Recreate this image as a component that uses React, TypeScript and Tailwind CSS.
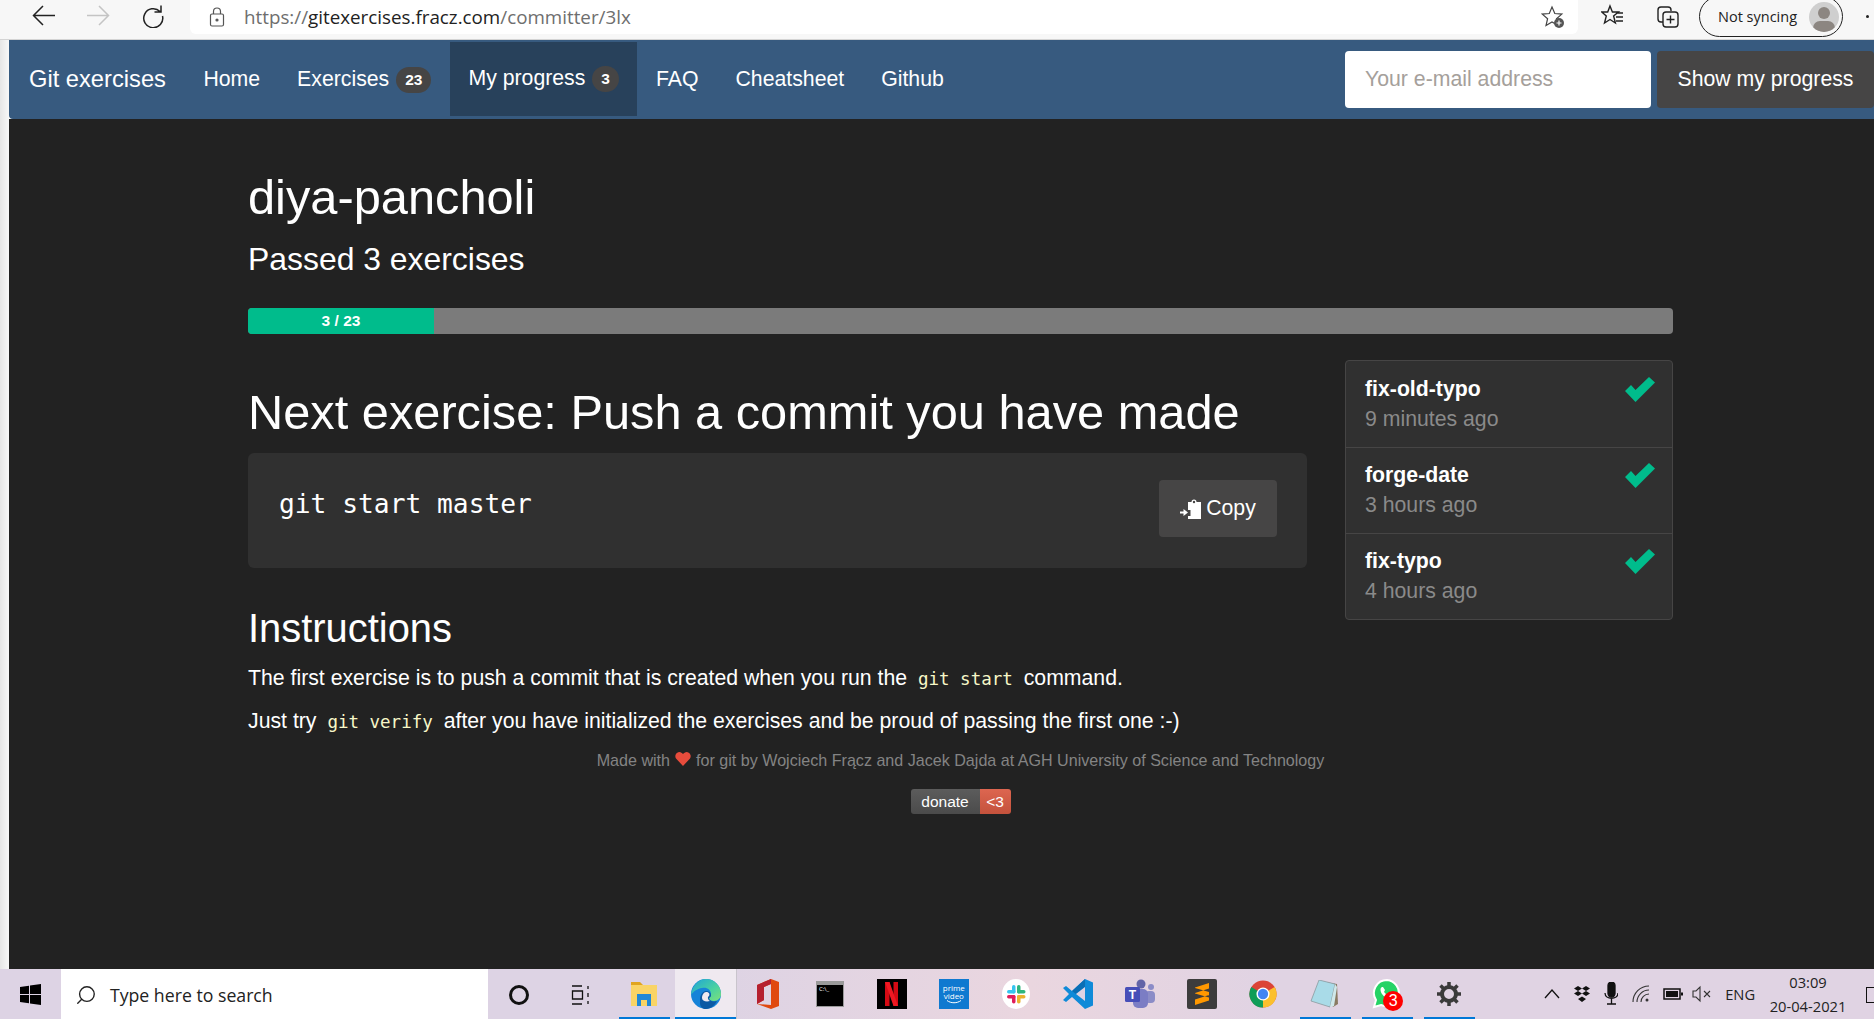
import { Search } from "lucide-react";

const NAV = [
  { label: "Home" },
  { label: "Exercises", badge: "23" },
  { label: "My progress", badge: "3", active: true },
  { label: "FAQ" },
  { label: "Cheatsheet" },
  { label: "Github" },
];

const PASSED = [
  { name: "fix-old-typo", when: "9 minutes ago" },
  { name: "forge-date", when: "3 hours ago" },
  { name: "fix-typo", when: "4 hours ago" },
];

function Check() {
  return (
    <svg width="30" height="25" viewBox="0 0 30 25" className="mt-[2px] shrink-0">
      <path d="M0 14 L6 8 L10.500 13 L24 0 L30 5.500 L10.500 25 Z" fill="#00bc8c" />
    </svg>
  );
}

function CopyIcon() {
  return (
    <svg width="21" height="20" viewBox="0 0 21 20" fill="#fff">
      <path d="M8 3h3.500a2.500 2.500 0 0 1 5 0H21v17H8v-3h2.500v-6H8z" />
      <circle cx="14" cy="3" r="1.200" fill="#464545" />
      <path d="M0 12.500h3.500V10L8 13.500 3.500 17v-2.500H0z" />
    </svg>
  );
}

function Browser() {
  return (
    <div className="flex h-[40px] shrink-0 border-b border-[#d4d4d4] bg-[#f7f7f7] font-['Open_Sans',sans-serif]">
      <div className="flex w-[190px] items-start pl-[32px] pt-[4px]">
        <svg width="24" height="24" viewBox="0 0 24 24" fill="none" stroke="#222" strokeWidth="1.500">
          <path d="M23 11.500H2M11 2 1.500 11.500 11 21" />
        </svg>
        <svg width="24" height="24" viewBox="0 0 24 24" fill="none" stroke="#c4c4c4" strokeWidth="1.500" className="ml-[30px]">
          <path d="M1 11.500h21M13 2l9.500 9.500L13 21" />
        </svg>
        <svg width="24" height="24" viewBox="0 0 24 24" fill="none" stroke="#222" strokeWidth="1.500" className="ml-[31px]">
          <path d="M19 7.500A9.500 9.500 0 1 0 21.500 12M20 1.500v6.500h-6.500" />
        </svg>
      </div>
      <div className="flex h-[34px] w-[1388px] items-center rounded-b-[6px] bg-white pl-[19px] pr-[13px]">
        <svg width="16" height="20" viewBox="0 0 16 20" fill="none" stroke="#555" strokeWidth="1.200">
          <rect x="1.500" y="7" width="13" height="12" rx="1.500" />
          <path d="M4.500 7V4.500a3.500 3.500 0 0 1 7 0V7" />
          <circle cx="8" cy="13" r="1" fill="#555" />
        </svg>
        <span className="ml-[19px] text-[18.800px] text-[#6e6e6e]">
          https://<span className="text-[#222]">gitexercises.fracz.com</span>/committer/3lx
        </span>
        <svg width="24" height="24" viewBox="0 0 24 24" fill="none" stroke="#444" strokeWidth="1.200" className="ml-auto">
          <path d="M11 2l2.800 6.500 7 .6-5.300 4.600 1.600 6.800L11 17l-6 3.500 1.600-6.800L1.300 9.100l7-.6z" />
          <circle cx="18" cy="18" r="5" fill="#555" stroke="none" />
          <path d="M18 15.500v5M15.500 18h5" stroke="#fff" />
        </svg>
      </div>
      <div className="flex flex-1 items-start pl-[23px] pt-[4px]">
        <svg width="24" height="24" viewBox="0 0 24 24" fill="none" stroke="#222" strokeWidth="1.400">
          <path d="M9 2l2.400 6h6l-4.800 4 1.800 7L9 15.500 3.500 19l1.800-7L.7 8h6zM16 9h6M15 13h7M15 17h7" />
        </svg>
        <svg width="24" height="24" viewBox="0 0 24 24" fill="none" stroke="#222" strokeWidth="1.400" className="ml-[31px]">
          <path d="M7 18H5a3 3 0 0 1-3-3V6a3 3 0 0 1 3-3h7a3 3 0 0 1 3 3v1" />
          <rect x="7" y="8" width="15" height="15" rx="3" />
          <path d="M14.500 11.500v8M10.500 15.500h8" />
        </svg>
        <div className="mt-[-8px] ml-[19px] flex h-[41px] w-[144px] shrink-0 items-center rounded-full border border-[#222] pl-[18px] text-[14.500px] text-[#222]">
          Not syncing
          <div className="ml-[12px] flex h-[30px] w-[30px] flex-col items-center overflow-hidden rounded-full bg-[#cfcfcf]">
            <div className="mt-[5px] h-[12px] w-[12px] shrink-0 rounded-full bg-[#8c8681]" />
            <div className="mt-[2px] h-[14px] w-[22px] shrink-0 rounded-full bg-[#8c8681]" />
          </div>
        </div>
        <div className="mt-[11px] ml-[23px] h-[3px] w-[3px] rounded-full bg-[#222]" />
      </div>
    </div>
  );
}

function NavBar() {
  return (
    <div className="flex h-[79px] shrink-0 items-stretch rounded-bl-[4px] bg-[#375a7f] font-['Liberation_Sans',sans-serif] text-white">
      <a className="flex items-center pl-[20px] pr-[19px] text-[23.700px]">Git exercises</a>
      {NAV.map((n) => (
        <a
          key={n.label}
          className={
            n.active
              ? "mt-[2px] mb-[3px] flex items-center bg-[#28415b] pl-[18.500px] pr-[18.500px] text-[21.250px]"
              : "flex items-center px-[18.500px] text-[21.250px]"
          }
        >
          {n.label}
          {n.badge && (
            <span className="ml-[7px] flex h-[26px] items-center rounded-full bg-[#464545] px-[9px] text-[15.500px] font-bold">
              {n.badge}
            </span>
          )}
        </a>
      ))}
      <div className="ml-auto flex items-center">
        <input
          readOnly
          placeholder="Your e-mail address"
          className="h-[57px] w-[306px] rounded-[4px] bg-white px-[20px] text-[21.250px] text-[#222] outline-none placeholder:text-[#a5a09b]"
        />
        <button className="ml-[6px] h-[57px] w-[217px] rounded-[4px] bg-[#464545] text-[21.250px] text-white">
          Show my progress
        </button>
      </div>
    </div>
  );
}

function Main() {
  return (
    <div className="min-h-0 flex-1 overflow-hidden bg-[#222] font-['Liberation_Sans',sans-serif] text-white">
      <div className="ml-[239px] w-[1425px]">
        <h1 className="pt-[48px] text-[48.750px] leading-[60px]">diya-pancholi</h1>
        <h3 className="mt-[13px] text-[31.900px] leading-[38px]">Passed 3 exercises</h3>
        <div className="mt-[30px] flex h-[26px] overflow-hidden rounded-[4px] bg-[#7b7b7b]">
          <div className="flex w-[186px] items-center justify-center bg-[#00bc8c] text-[15.500px] font-bold">3 / 23</div>
        </div>
        <div className="mt-[26px] flex items-start gap-[38px]">
          <div className="w-[1059px]">
            <h2 className="mt-[22px] text-[48.750px] leading-[60px]">Next exercise: Push a commit you have made</h2>
            <div className="mt-[11px] flex h-[115px] items-start justify-between rounded-[6px] bg-[#303030] pt-[27px] pl-[31px] pr-[30px]">
              <code className="mt-[8px] font-['DejaVu_Sans_Mono',monospace] text-[26.250px] leading-[33px]">git start master</code>
              <button className="flex h-[57px] w-[118px] items-center justify-center gap-[5px] rounded-[4px] bg-[#464545] text-[21.250px]">
                <CopyIcon />
                Copy
              </button>
            </div>
            <h3 className="mt-[37px] text-[39.900px] leading-[46px]">Instructions</h3>
            <p className="mt-[12px] text-[21.250px] leading-[30px]">
              The first exercise is to push a commit that is created when you run the{" "}
              <code className="mx-[5px] font-['DejaVu_Sans_Mono',monospace] text-[17.500px] text-[#f7f7c8]">git start</code>{" "}
              command.
            </p>
            <p className="mt-[12px] text-[21.250px] leading-[30px]">
              Just try{" "}
              <code className="mx-[5px] font-['DejaVu_Sans_Mono',monospace] text-[17.500px] text-[#f7f7c8]">git verify</code>{" "}
              after you have initialized the exercises and be proud of passing the first one :-)
            </p>
          </div>
          <div className="w-[328px] overflow-hidden rounded-[4px] border border-[#464545] bg-[#303030]">
            {PASSED.map((p, i) => (
              <div
                key={p.name}
                className={
                  i > 0
                    ? "flex h-[86px] justify-between border-t border-[#464545] pt-[13px] pl-[19px] pr-[17px]"
                    : "flex h-[86px] justify-between pt-[14px] pl-[19px] pr-[17px]"
                }
              >
                <div>
                  <div className="text-[21.250px] leading-[29px] font-bold">{p.name}</div>
                  <div className="mt-[1px] text-[21.250px] leading-[29px] text-[#8a8a8a]">{p.when}</div>
                </div>
                <Check />
              </div>
            ))}
          </div>
        </div>
        <div className="mt-[11px] flex flex-col items-center text-[#848484]">
          <div className="flex items-center text-[16.100px] leading-[24px]">
            Made with
            <svg width="16" height="14" viewBox="0 0 16 14" className="mx-[5px] mt-[-3px]">
              <path d="M8 14 1 6.500A4 4 0 0 1 8 2a4 4 0 0 1 7 4.500z" fill="#e74c3c" />
            </svg>
            for git by Wojciech Frącz and Jacek Dajda at AGH University of Science and Technology
          </div>
          <div className="mt-[17px] flex h-[25px] overflow-hidden rounded-[3px] text-[15.500px] text-white">
            <span className="flex w-[69px] items-center justify-center bg-linear-to-b from-[#5c5c5c] to-[#4b4b4b]">donate</span>
            <span className="flex w-[31px] items-center justify-center bg-linear-to-b from-[#dd6650] to-[#c4523c]">&lt;3</span>
          </div>
        </div>
      </div>
    </div>
  );
}

function TaskIcon({ children, under, hi }: { children: React.ReactNode; under?: boolean; hi?: boolean }) {
  return (
    <div className={hi ? "flex h-full w-[62px] flex-col items-center border-r border-[#c9c4cc] bg-[#efe9f0]" : "flex h-full w-[62px] flex-col items-center"}>
      <div className="flex flex-1 items-center justify-center pt-[2px]">{children}</div>
      <div className={under ? (hi ? "h-[2px] w-full bg-[#0078d7]" : "h-[2px] w-[51px] bg-[#0078d7]") : "h-[2px]"} />
    </div>
  );
}

function Taskbar() {
  return (
    <div className="flex h-[50px] shrink-0 items-stretch bg-[linear-gradient(90deg,#ddd3e4_0%,#ddd3e4_38%,#ead6df_55%,#e0d3e3_68%,#e0d3e3_100%)] font-['Open_Sans',sans-serif] text-[#222]">
      <div className="flex w-[61px] items-center justify-center">
        <svg width="21" height="21" viewBox="0 0 21 21" fill="#000">
          <path d="M0 3l9-1.300V10H0zM10 1.500 21 0v10H10zM0 11h9v8.300L0 18zM10 11h11v10l-11-1.500z" />
        </svg>
      </div>
      <div className="flex w-[428px] items-center bg-white pl-[14px] pt-[2px] text-[17.700px]">
        <Search size={22} strokeWidth={1.500} className="-scale-x-100" />
        <span className="ml-[13px]">Type here to search</span>
      </div>
      <div className="flex w-[62px] items-center justify-center pt-[2px]">
        <div className="h-[20px] w-[20px] rounded-full border-[3px] border-[#111]" />
      </div>
      <div className="flex w-[61px] items-center justify-center pt-[2px]">
        <svg width="20" height="20" viewBox="0 0 20 20" fill="none" stroke="#111" strokeWidth="1.300">
          <path d="M1 1h10M1 19h10M1.500 6h10v8h-10zM17 1v3M17 8v4M17 16v3" />
        </svg>
      </div>
      <div className="w-[2px]" />
      <TaskIcon under>
        <svg width="28" height="26" viewBox="0 0 28 26">
          <path d="M1 1h9l3 3h-12z" fill="#e0a520" />
          <rect x="1" y="4" width="26" height="21" fill="#f9d466" />
          <path d="M7 25V13h14v12h-4v-6h-6v6z" fill="#1f88d8" />
        </svg>
      </TaskIcon>
      <TaskIcon under hi>
        <svg width="30" height="30" viewBox="0 0 30 30">
          <defs>
            <linearGradient id="edgeTop" x1="0" y1="0" x2="1" y2="1">
              <stop offset="0" stopColor="#1ea3d8" />
              <stop offset="0.6" stopColor="#4ad2a0" />
              <stop offset="1" stopColor="#7fe07a" />
            </linearGradient>
          </defs>
          <circle cx="15" cy="15" r="15" fill="#1683d8" />
          <path d="M15 0a15 15 0 0 1 15 15c0 4-3 7-7 7-3 0-5-1-5-3 1-1 2-2 2-4 0-4-4-7-9-6-5 .5-9 4-11 7C1 7 7 0 15 0z" fill="url(#edgeTop)" />
          <path d="M9 20c0-4 3-8 6-8s5 2 5 4-1 2-2 3c0 3 4 4 8 3-2 4-6 8-11 8-3 0-6-2-6-6z" fill="#0c59a4" />
          <path d="M11 19c0-3 2-6 4-6 3 0 4 2 3 4-2 1-1 4 1 5-4 1-8 0-8-3z" fill="#efe9f0" />
        </svg>
      </TaskIcon>
      <TaskIcon>
        <svg width="24" height="30" viewBox="0 0 24 30">
          <path d="M15 0l8 3v24l-8 3L1 25l14 1V5L8 8v13l-7 4V6z" fill="#e0490f" />
          <path d="M15 0 1 6v19l7-4V8l7-3z" fill="#b5202f" />
        </svg>
      </TaskIcon>
      <TaskIcon>
        <div className="h-[26px] w-[28px] border-x border-b border-t-[4px] border-[#9a9a9a] bg-black pl-[2px] pt-[1px] text-[6px] leading-[7px] text-white">C:\_</div>
      </TaskIcon>
      <TaskIcon>
        <div className="flex h-[30px] w-[30px] items-center justify-center bg-black">
          <svg width="13" height="24" viewBox="0 0 13 24" fill="#d50a14">
            <path d="M0 0h4.500v24H0zM8.500 0H13v24H8.500z" />
            <path d="M0 0h4.500L13 24H8.500z" fill="#f01822" />
          </svg>
        </div>
      </TaskIcon>
      <TaskIcon>
        <div className="flex h-[30px] w-[30px] flex-col items-center justify-center bg-[#0f79d0] text-[8px] leading-[8px] text-white">
          <span>prime</span>
          <span>video</span>
          <svg width="16" height="4" viewBox="0 0 16 4" fill="none" stroke="#fff"><path d="M1 0.500c4 3 10 3 14 0" /></svg>
        </div>
      </TaskIcon>
      <TaskIcon>
        <svg width="28" height="30" viewBox="0 0 28 30">
          <ellipse cx="14" cy="15" rx="14" ry="15" fill="#fff" />
          <rect x="10" y="6" width="3.500" height="8.500" rx="1.700" fill="#36c5f0" />
          <rect x="5" y="11" width="8.500" height="3.500" rx="1.700" fill="#36c5f0" />
          <rect x="15" y="6" width="3.500" height="8.500" rx="1.700" fill="#2eb67d" />
          <rect x="15" y="11" width="8.500" height="3.500" rx="1.700" fill="#2eb67d" />
          <rect x="10" y="16" width="3.500" height="8.500" rx="1.700" fill="#e01e5a" />
          <rect x="5" y="16" width="8.500" height="3.500" rx="1.700" fill="#e01e5a" />
          <rect x="15" y="16" width="3.500" height="8.500" rx="1.700" fill="#ecb22e" />
          <rect x="15" y="16" width="8.500" height="3.500" rx="1.700" fill="#ecb22e" />
        </svg>
      </TaskIcon>
      <TaskIcon>
        <svg width="30" height="30" viewBox="0 0 30 30">
          <path d="M22 0l8 3.500v23L22 30 9 18l-6 5-3-2 6-6-6-6 3-2 6 5z" fill="#0f8ad8" />
          <path d="M22 0 9 12l4 3 9-7z" fill="#0a6fb5" />
          <path d="M22 8 13 15l9 7z" fill="#dfd3e3" />
        </svg>
      </TaskIcon>
      <TaskIcon>
        <svg width="30" height="30" viewBox="0 0 30 30">
          <circle cx="16" cy="5" r="4.500" fill="#6264a7" />
          <circle cx="26" cy="8" r="3" fill="#8b8cc7" />
          <rect x="20" y="12" width="10" height="12" rx="4" fill="#8b8cc7" />
          <rect x="8" y="10" width="15" height="19" rx="5" fill="#7b7dc4" />
          <rect x="0" y="8" width="15" height="15" rx="1.500" fill="#464eb8" />
          <text x="7.500" y="20" textAnchor="middle" fontSize="12" fontWeight="700" fill="#fff" fontFamily="Liberation Sans">T</text>
        </svg>
      </TaskIcon>
      <TaskIcon>
        <div className="flex h-[30px] w-[30px] items-center justify-center rounded-[2px] bg-[#3c3c3c]">
          <svg width="18" height="22" viewBox="0 0 18 22" fill="#ff9800">
            <path d="M16 0v5.500L2 10V4.500zM2 10.500l14 4V9L2 5zM16 12v5.500L2 22v-5.500z" />
          </svg>
        </div>
      </TaskIcon>
      <TaskIcon>
        <svg width="28" height="28" viewBox="0 0 30 30">
          <circle cx="15" cy="15" r="14.500" fill="#db4437" />
          <path d="M15 15 27.500 7.500A14.500 14.500 0 0 1 15 29.500z" fill="#fbc02d" />
          <path d="M15 15 15 29.500A14.500 14.500 0 0 1 2.500 7.500z" fill="#0f9d58" />
          <circle cx="15" cy="15" r="7" fill="#fff" />
          <circle cx="15" cy="15" r="5.500" fill="#4285f4" />
        </svg>
      </TaskIcon>
      <TaskIcon under>
        <svg width="30" height="28" viewBox="0 0 30 28">
          <path d="M10 1 27 4l1 20-5 3z" fill="#8a7a62" />
          <path d="M9 0 25 4 20 27 1 21z" fill="#a9dbe8" stroke="#8a9aa0" strokeWidth="0.800" />
          <path d="M20 27 25 4l2 3-3 19z" fill="#cfe8ea" />
        </svg>
      </TaskIcon>
      <TaskIcon under>
        <div className="relative">
          <svg width="30" height="30" viewBox="0 0 30 30">
            <path d="M15 1a13 13 0 0 0-11 20L2 28l7-2A13 13 0 1 0 15 1z" fill="#25d366" stroke="#fff" strokeWidth="2" />
            <path d="M10 8c-2 1-2 4 0 7s5 5 8 5l2-3-3-2-2 1-3-3 1-2-2-3z" fill="#fff" />
          </svg>
          <span className="absolute left-[11px] top-[12px] flex h-[20px] w-[20px] items-center justify-center rounded-full bg-[#f00] font-['Liberation_Sans',sans-serif] text-[16px] leading-none text-white">3</span>
        </div>
      </TaskIcon>
      <TaskIcon under>
        <svg width="24" height="24" viewBox="0 0 24 24" fill="none" stroke="#3a3a3a" strokeWidth="4">
          <circle cx="12" cy="12" r="7" />
          <path d="M12 0v4M12 20v4M0 12h4M20 12h4M3.500 3.500l3 3M17.500 17.500l3 3M20.500 3.500l-3 3M6.500 17.500l-3 3" strokeWidth="3.500" />
        </svg>
      </TaskIcon>
      <div className="ml-[64px] flex items-center gap-[13px] text-[14.700px]">
        <svg width="16" height="10" viewBox="0 0 16 10" fill="none" stroke="#111" strokeWidth="1.300"><path d="M1 9l7-8 7 8" /></svg>
        <svg width="18" height="16" viewBox="0 0 18 16" fill="#111"><path d="M5 0l4 2.500L5 5 1 2.500zM13 0l4 2.500L13 5 9 2.500zM5 5l4 2.500L5 10 1 7.500zM13 5l4 2.500L13 10 9 7.500zM9 10.500l4 2.500-4 3-4-3z" /></svg>
        <svg width="14" height="24" viewBox="0 0 14 24" fill="none" stroke="#111" strokeWidth="1.300"><rect x="4" y="0" width="7" height="15" rx="3.500" fill="#111" /><path d="M1 11c0 7 13 7 13 0M7.500 17v5M3 22h9" /></svg>
        <svg width="18" height="18" viewBox="0 0 18 18" fill="none" stroke="#333" strokeWidth="1.100" className="ml-[1px]"><path d="M1 17A16 16 0 0 1 17 1M5 17A12 12 0 0 1 17 5M9 17a8 8 0 0 1 8-8" /><circle cx="15" cy="15" r="1.500" fill="#333" stroke="none" /></svg>
        <svg width="20" height="14" viewBox="0 0 20 14"><rect x="1" y="2" width="16" height="10" fill="none" stroke="#111" strokeWidth="1.500" /><rect x="3" y="4" width="12" height="6" fill="#111" /><rect x="18" y="5.500" width="2" height="3" fill="#111" /></svg>
        <svg width="20" height="18" viewBox="0 0 20 18" fill="none" stroke="#333" strokeWidth="1.100" className="ml-[-4px]"><path d="M1 6h3l4-4v14l-4-4H1zM12 6l6 6M18 6l-6 6" /></svg>
        <span>ENG</span>
      </div>
      <div className="ml-[6px] flex w-[94px] flex-col items-center justify-center text-[14.700px] leading-[24px]">
        <span>03:09</span>
        <span>20-04-2021</span>
      </div>
      <div className="mt-[18px] ml-[11px] h-[16px] w-[8px] border border-r-0 border-[#111]" />
    </div>
  );
}

export default function App() {
  return (
    <div className="flex h-[1019px] w-[1874px] flex-col overflow-hidden bg-white">
      <Browser />
      <div className="flex min-h-0 flex-1">
        <div className="w-[9px] shrink-0 bg-linear-to-r from-[#e6e6e6] to-[#f8f8f8]" />
        <div className="flex min-w-0 flex-1 flex-col">
          <NavBar />
          <Main />
        </div>
      </div>
      <Taskbar />
    </div>
  );
}
